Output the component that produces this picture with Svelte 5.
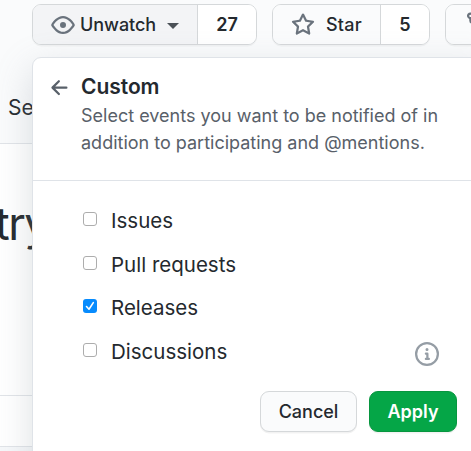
<script>
  let events = $state([
    { name: 'Issues', on: false },
    { name: 'Pull requests', on: false },
    { name: 'Releases', on: true },
    { name: 'Discussions', on: false }
  ]);
</script>

<div class="page">
  <header>
    <div class="actions">
      <div class="group watch">
        <button class="main">
          <svg width="24" height="24" viewBox="0 0 16 16"><path fill-rule="evenodd" d="M1.679 7.932c.412-.621 1.242-1.75 2.366-2.717C5.175 4.242 6.527 3.5 8 3.5c1.473 0 2.824.742 3.955 1.715 1.124.967 1.954 2.096 2.366 2.717a.119.119 0 010 .136c-.412.621-1.242 1.75-2.366 2.717C10.825 11.758 9.473 12.5 8 12.5c-1.473 0-2.824-.742-3.955-1.715C2.92 9.818 2.09 8.69 1.679 8.068a.119.119 0 010-.136zM8 2c-1.981 0-3.67.992-4.933 2.078C1.797 5.169.88 6.423.43 7.1a1.619 1.619 0 000 1.798c.45.678 1.367 1.932 2.637 3.024C4.329 13.008 6.019 14 8 14c1.981 0 3.67-.992 4.933-2.078 1.27-1.091 2.187-2.345 2.637-3.023a1.619 1.619 0 000-1.798c-.45-.678-1.367-1.932-2.637-3.023C11.671 2.992 9.981 2 8 2zm0 8a2 2 0 100-4 2 2 0 000 4z" /></svg>
          <span class="label">Unwatch</span>
          <i class="caret"></i>
        </button>
        <a class="count" href="#watchers">27</a>
      </div>
      <div class="group star">
        <button class="main">
          <svg width="24" height="24" viewBox="0 0 16 16"><path fill-rule="evenodd" d="M8 .25a.75.75 0 01.673.418l1.882 3.815 4.21.612a.75.75 0 01.416 1.279l-3.046 2.97.719 4.192a.75.75 0 01-1.088.791L8 12.347l-3.766 1.98a.75.75 0 01-1.088-.79l.72-4.194L.818 6.374a.75.75 0 01.416-1.28l4.21-.611L7.327.668A.75.75 0 018 .25zm0 2.445L6.615 5.5a.75.75 0 01-.564.41l-3.097.45 2.24 2.184a.75.75 0 01.216.664l-.528 3.084 2.769-1.456a.75.75 0 01.698 0l2.77 1.456-.53-3.084a.75.75 0 01.216-.664l2.24-2.183-3.096-.45a.75.75 0 01-.564-.41L8 2.694z" /></svg>
          <span class="label">Star</span>
        </button>
        <a class="count" href="#stars">5</a>
      </div>
      <div class="group fork">
        <button class="main">
          <svg width="24" height="24" viewBox="0 0 16 16"><path fill-rule="evenodd" d="M5 3.25a.75.75 0 11-1.5 0 .75.75 0 011.5 0zm0 2.122a2.25 2.25 0 10-1.5 0v.878A2.25 2.25 0 005.75 8.5h1.5v2.128a2.251 2.251 0 101.5 0V8.5h1.5a2.25 2.25 0 002.25-2.25v-.878a2.25 2.25 0 10-1.5 0v.878a.75.75 0 01-.75.75h-4.5A.75.75 0 015 6.25v-.878z" /></svg>
        </button>
      </div>
    </div>
    <nav>Se</nav>
  </header>
  <main>
    <h1>try</h1>
    <div class="row"></div>
  </main>
  <div class="foot"></div>

  <section class="panel">
    <div class="intro">
      <svg class="back" width="24" height="24" viewBox="0 0 16 16"><path fill-rule="evenodd" d="M7.78 12.53a.75.75 0 01-1.06 0L2.47 8.28a.75.75 0 010-1.06l4.25-4.25a.75.75 0 011.06 1.06L4.81 7h7.44a.75.75 0 010 1.5H4.81l2.97 2.97a.75.75 0 010 1.06z" /></svg>
      <div>
        <h2>Custom</h2>
        <p>Select events you want to be notified of in<br />addition to participating and @mentions.</p>
      </div>
    </div>
    <div class="list">
      {#each events as event}
        <label>
          <input type="checkbox" bind:checked={event.on} />
          <span class="box" class:on={event.on}>
            {#if event.on}
              <svg width="14" height="14" viewBox="0 0 14 14"><path d="M3.5 7.5L6 10.2L10.3 3.6" /></svg>
            {/if}
          </span>
          <span class="name">{event.name}</span>
          {#if event.name === 'Discussions'}
            <svg class="info" width="24" height="24" viewBox="0 0 16 16"><path fill-rule="evenodd" d="M8 1.5a6.5 6.5 0 100 13 6.5 6.5 0 000-13zM0 8a8 8 0 1116 0A8 8 0 010 8zm6.5-.25A.75.75 0 017.25 7h1a.75.75 0 01.75.75v2.75h.25a.75.75 0 010 1.5h-2a.75.75 0 010-1.5h.25v-2h-.25a.75.75 0 01-.75-.75zM8 6a1 1 0 100-2 1 1 0 000 2z" /></svg>
          {/if}
        </label>
      {/each}
    </div>
    <div class="buttons">
      <button class="cancel">Cancel</button>
      <button class="apply">Apply</button>
    </div>
  </section>
</div>

<style>
  :global(body) { margin: 0; overflow: hidden; }
  .page, .page * { box-sizing: border-box; }
  .page {
    position: relative;
    width: 471px;
    height: 451px;
    overflow: hidden;
    background: #fff;
    color: #24292e;
    font-family: Inter, "Liberation Sans", sans-serif;
  }
  button { font: inherit; color: inherit; margin: 0; padding: 0; border: 0; background: none; }
  svg { display: block; fill: #6a737d; flex: none; }
  header { height: 144px; background: #fafbfc; border-bottom: 1px solid #e1e4e8; padding-top: 4px; }
  .actions { display: flex; gap: 15px; padding-left: 32px; width: 600px; }
  .group {
    display: flex;
    height: 41px;
    flex: none;
    border: 1px solid #d5d8da;
    border-radius: 9px;
    overflow: hidden;
    box-shadow: 0 1.5px 0 rgba(27, 31, 35, 0.04);
    font-size: 18px;
    line-height: 26px;
  }
  .main { display: flex; align-items: center; background: #fafbfc; font-weight: 500; }
  .count {
    flex: 1;
    display: flex;
    align-items: center;
    justify-content: center;
    background: #fff;
    border-left: 1px solid #d5d8da;
    color: #24292e;
    font-weight: 600;
    text-decoration: none;
  }
  .watch { width: 225px; }
  .watch .main { width: 164px; padding-left: 18px; background: #f3f4f6; }
  .watch .label { margin-left: 5px; width: 76px; letter-spacing: -0.05px; }
  .label, .count { position: relative; }
  .label { padding-top: 1px; }
  .count { padding-top: 1px; }
  .caret { margin: 2px 0 0 11px; border: 6px solid transparent; border-top-color: #4b5157; border-bottom: 0; }
  .star { width: 158px; }
  .star .main { width: 107px; padding-left: 18px; }
  .star .label { margin-left: 11px; letter-spacing: 0.2px; }
  .fork { width: 140px; }
  .fork .main { width: 100px; padding-left: 18px; }
  .fork svg { margin-top: -3px; }
  nav { margin: 50px 0 0 8px; font-size: 21px; line-height: 26px; }
  h1 { margin: 0; height: 251px; padding-top: 53px; font-size: 45px; line-height: 54px; font-weight: 400; letter-spacing: -1.5px; margin-left: -5px; }
  .row { height: 52px; border: 1px solid #e1e4e8; border-width: 1px 0; }
  .foot { height: 4px; background: #f6f8fa; }
  .panel {
    position: absolute;
    left: 32px;
    top: 57px;
    width: 460px;
    height: 420px;
    background: #fff;
    border: 1px solid #dfe3e8;
    border-radius: 9px;
    box-shadow: 0 12px 36px rgba(140, 149, 159, 0.3);
  }
  .intro { display: flex; height: 123px; padding: 15px 0 0 15px; border-bottom: 1px solid #dfe3e8; }
  .back { margin: 3px 9px 0 0; fill: #586069; }
  h2 { margin: 0; font-size: 21px; line-height: 28px; font-weight: 600; letter-spacing: -0.05px; }
  p { margin: 1px 0 0; color: #586069; font-size: 18px; line-height: 27px; white-space: nowrap; }
  .list { padding: 18px 0 0 50px; }
  label { display: flex; height: 43.7px; align-items: center; width: 356px; }
  input { position: absolute; opacity: 0; pointer-events: none; }
  .box { width: 14px; height: 14px; border: 1px solid #adadad; border-radius: 3px; background: #fff; margin-top: -4px; flex: none; }
  .box.on { border: 0; background: #078bfd; }
  .box svg { fill: none; stroke: #fff; stroke-width: 1.6; stroke-linecap: round; stroke-linejoin: round; }
  .name { margin-left: 14px; font-size: 20.5px; line-height: 24px; }
  .info { margin: 4px 0 0 auto; fill: #959da5; }
  .buttons { display: flex; gap: 12px; padding: 17px 0 0 227px; }
  .buttons button { height: 41px; border-radius: 9px; font-size: 18px; box-shadow: 0 1.5px 0 rgba(27, 31, 35, 0.06); }
  .buttons .cancel { width: 97px; background: #fafbfc; border: 1px solid #d5d8da; font-weight: 500; }
  .buttons .apply { width: 88px; background: #05a647; border: 1px solid #07963f; color: #fff; font-weight: 600; }
</style>
